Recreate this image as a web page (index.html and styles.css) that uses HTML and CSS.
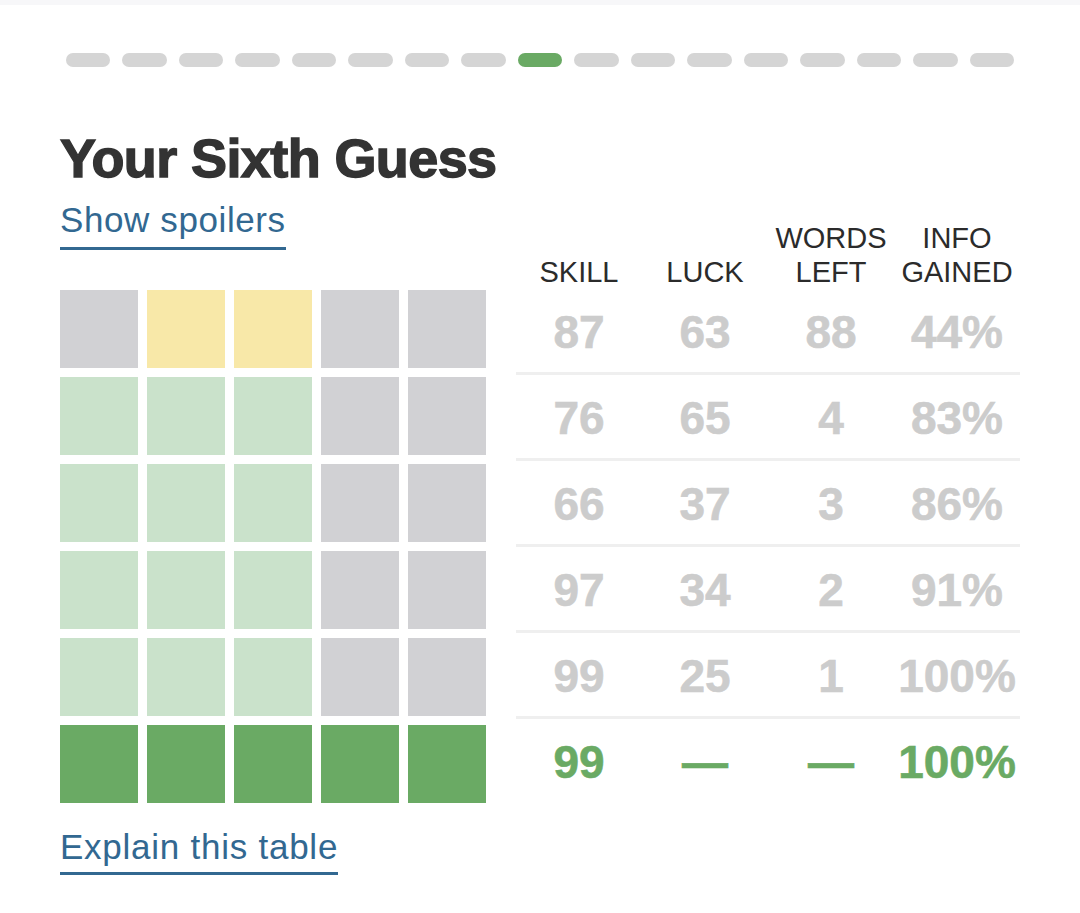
FILE: index.html
```html
<!DOCTYPE html>
<html lang="en">
<head>
<meta charset="utf-8">
<title>Your Sixth Guess</title>
<link rel="stylesheet" href="styles.css">
</head>
<body>
<div class="topstrip"></div>
<div class="page">
  <div class="progress">
    <span class="pill"></span><span class="pill"></span><span class="pill"></span><span class="pill"></span>
    <span class="pill"></span><span class="pill"></span><span class="pill"></span><span class="pill"></span>
    <span class="pill active"></span>
    <span class="pill"></span><span class="pill"></span><span class="pill"></span><span class="pill"></span>
    <span class="pill"></span><span class="pill"></span><span class="pill"></span><span class="pill"></span>
  </div>

  <h1 class="title">Your Sixth Guess</h1>

  <div class="main">
    <div class="left">
      <a class="link spoilers" href="#">Show spoilers</a>
      <div class="board">
        <div class="tile gray"></div><div class="tile yellow"></div><div class="tile yellow"></div><div class="tile gray"></div><div class="tile gray"></div>
        <div class="tile light"></div><div class="tile light"></div><div class="tile light"></div><div class="tile gray"></div><div class="tile gray"></div>
        <div class="tile light"></div><div class="tile light"></div><div class="tile light"></div><div class="tile gray"></div><div class="tile gray"></div>
        <div class="tile light"></div><div class="tile light"></div><div class="tile light"></div><div class="tile gray"></div><div class="tile gray"></div>
        <div class="tile light"></div><div class="tile light"></div><div class="tile light"></div><div class="tile gray"></div><div class="tile gray"></div>
        <div class="tile green"></div><div class="tile green"></div><div class="tile green"></div><div class="tile green"></div><div class="tile green"></div>
      </div>
      <a class="link explain" href="#">Explain this table</a>
    </div>

    <div class="stats">
      <div class="head">
        <div class="hcell">SKILL</div>
        <div class="hcell">LUCK</div>
        <div class="hcell">WORDS<br>LEFT</div>
        <div class="hcell">INFO<br>GAINED</div>
      </div>
      <div class="row"><div class="cell">87</div><div class="cell">63</div><div class="cell">88</div><div class="cell">44%</div></div>
      <div class="row"><div class="cell">76</div><div class="cell">65</div><div class="cell">4</div><div class="cell">83%</div></div>
      <div class="row"><div class="cell">66</div><div class="cell">37</div><div class="cell">3</div><div class="cell">86%</div></div>
      <div class="row"><div class="cell">97</div><div class="cell">34</div><div class="cell">2</div><div class="cell">91%</div></div>
      <div class="row"><div class="cell">99</div><div class="cell">25</div><div class="cell">1</div><div class="cell">100%</div></div>
      <div class="row final"><div class="cell">99</div><div class="cell">—</div><div class="cell">—</div><div class="cell">100%</div></div>
    </div>
  </div>
</div>
</body>
</html>
```

FILE: styles.css
```css
html, body {
  margin: 0;
  padding: 0;
  background: #ffffff;
  font-family: "Liberation Sans", Arial, sans-serif;
  color: #333333;
}

.topstrip {
  height: 5px;
  background: #f7f7f9;
}

.page {
  width: 960px;
  padding-left: 60px;
}

.progress {
  display: flex;
  gap: 12px;
  margin: 48px 6px 0 6px;
  height: 14px;
}

.pill {
  flex: 1;
  height: 14px;
  border-radius: 7px;
  background: #d5d5d5;
}

.pill.active {
  background: #6aaa64;
}

.title {
  margin: 64px 0 0 0;
  font-size: 54px;
  line-height: 54px;
  font-weight: 700;
  letter-spacing: -0.6px;
  -webkit-text-stroke: 1.4px #333333;
  color: #333333;
}

.main {
  display: flex;
  gap: 30px;
  align-items: flex-start;
}

.left {
  display: flex;
  flex-direction: column;
  align-items: flex-start;
  width: 426px;
}

.link {
  display: inline-block;
  font-size: 35px;
  line-height: 34px;
  letter-spacing: 0.6px;
  color: #326891;
  text-decoration: none;
  padding-bottom: 9px;
  border-bottom: 3px solid #326891;
}

.spoilers {
  margin-top: 18px;
  padding-bottom: 10px;
}

.board {
  display: grid;
  grid-template-columns: repeat(5, 78px);
  grid-auto-rows: 78px;
  gap: 9px;
  margin-top: 40px;
}

.tile.gray { background: #d1d1d4; }
.tile.yellow { background: #f8e8a8; }
.tile.light { background: #cae2cb; }
.tile.green { background: #6aaa64; }

.explain {
  margin-top: 27px;
  letter-spacing: 0.75px;
  padding-bottom: 8px;
}

.stats {
  width: 504px;
  margin-top: 37px;
}

.head,
.row {
  display: grid;
  grid-template-columns: repeat(4, 1fr);
}

.hcell {
  display: flex;
  align-items: flex-end;
  justify-content: center;
  text-align: center;
  font-size: 29px;
  line-height: 34px;
  height: 67px;
  color: #2b2b2b;
}

.row {
  height: 83px;
  border-bottom: 3px solid #efefef;
}

.row.final {
  border-bottom: none;
}

.cell {
  text-align: center;
  font-size: 46px;
  font-weight: 700;
  line-height: 80px;
  padding-top: 3px;
  -webkit-text-stroke: 0.6px #cccccc;
  color: #cccccc;
}

.final .cell {
  color: #6aaa64;
  -webkit-text-stroke: 0.6px #6aaa64;
}
```
